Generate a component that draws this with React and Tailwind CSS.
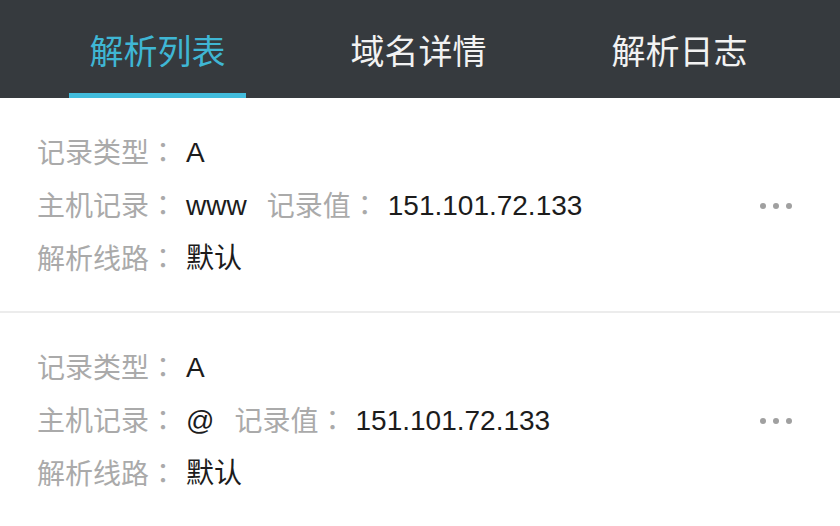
const tabs = ["解析列表", "域名详情", "解析日志"];

const records = [
  { type: "A", host: "www", value: "151.101.72.133", line: "默认" },
  { type: "A", host: "@", value: "151.101.72.133", line: "默认" },
];

function Label({ text }) {
  return (
    <span className="text-[#aaaaaa]">
      {text}
      <span className="font-['Noto_Sans_CJK_TC']">：</span>
    </span>
  );
}

function Record({ rec, last }) {
  return (
    <div
      className={`flex items-center pl-[37px] pr-[48px] pt-[28px] pb-[26px] ${
        last ? "border-b border-[#ececec]" : "border-b-2 border-[#ececec]"
      }`}
    >
      <div className="flex-1 flex flex-col">
        <div className="h-[53px] flex items-center">
          <Label text="记录类型" />
          <span className="ml-[9px] text-[#1c1c1c]">{rec.type}</span>
        </div>
        <div className="h-[53px] flex items-center">
          <Label text="主机记录" />
          <span className="ml-[9px] mr-[20px] text-[#1c1c1c]">{rec.host}</span>
          <Label text="记录值" />
          <span className="ml-[9px] text-[#1c1c1c]">{rec.value}</span>
        </div>
        <div className="h-[53px] flex items-center">
          <Label text="解析线路" />
          <span className="ml-[9px] text-[#1c1c1c]">{rec.line}</span>
        </div>
      </div>
      <div className="flex gap-[7px]">
        <span className="w-[6px] h-[6px] rounded-full bg-[#a0a0a0]" />
        <span className="w-[6px] h-[6px] rounded-full bg-[#a0a0a0]" />
        <span className="w-[6px] h-[6px] rounded-full bg-[#a0a0a0]" />
      </div>
    </div>
  );
}

export default function App() {
  return (
    <div className="w-[840px] h-[526px] bg-white overflow-hidden font-['Liberation_Sans','Noto_Sans_CJK_SC',sans-serif] text-[28px]">
      <div className="h-[98px] bg-[#363a3e] flex pl-[69px] gap-[84px]">
        {tabs.map((t, i) => (
          <div key={t} className="w-[177px] flex flex-col">
            <div
              className={`h-[93px] pt-[12px] flex items-center justify-center text-[34px] ${
                i === 0 ? "text-[#3fb6d4]" : "text-[#f2f2f2]"
              }`}
            >
              {t}
            </div>
            <div className={`h-[5px] ${i === 0 ? "bg-[#42bcdc]" : ""}`} />
          </div>
        ))}
      </div>
      {records.map((r, i) => (
        <Record key={i} rec={r} last={i === records.length - 1} />
      ))}
    </div>
  );
}
